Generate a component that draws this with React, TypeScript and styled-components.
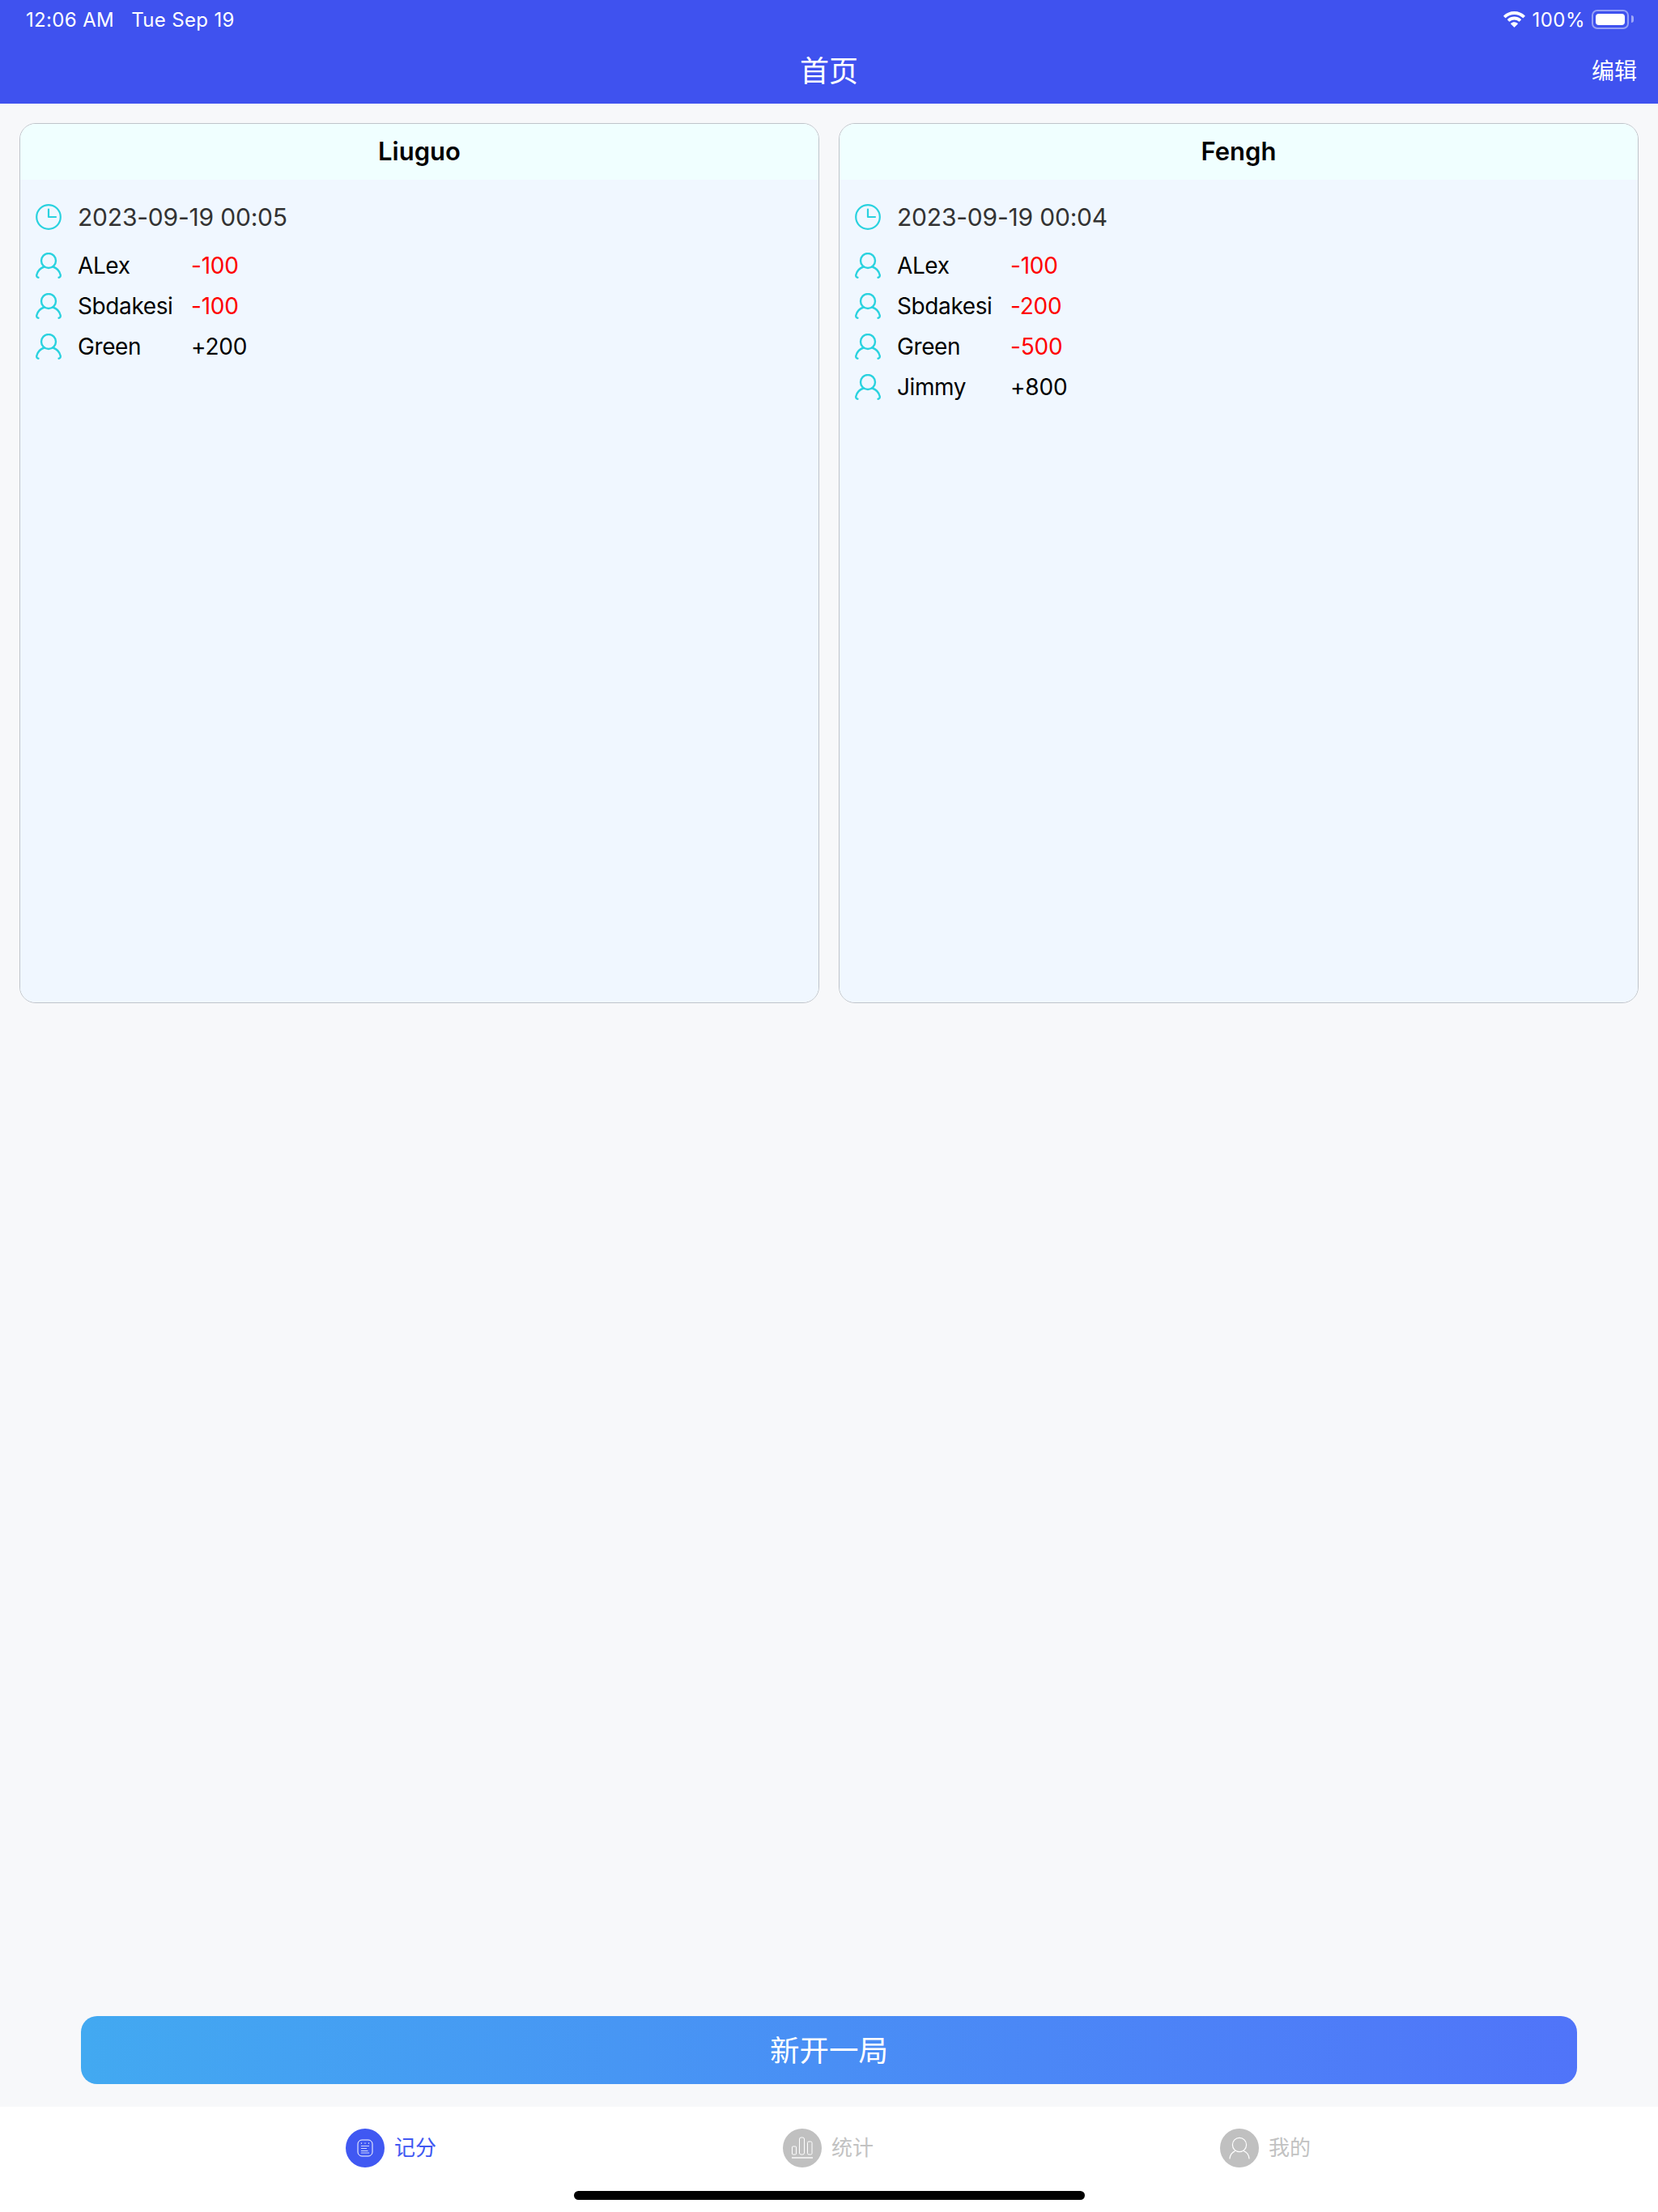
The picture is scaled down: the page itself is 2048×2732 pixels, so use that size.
import React from "react";
import styled, { createGlobalStyle } from "styled-components";

interface ScoreRow {
  name: string;
  score: string;
}

interface Game {
  host: string;
  time: string;
  rows: ScoreRow[];
}

const games: Game[] = [
  {
    host: "Liuguo",
    time: "2023-09-19 00:05",
    rows: [
      { name: "ALex", score: "-100" },
      { name: "Sbdakesi", score: "-100" },
      { name: "Green", score: "+200" },
    ],
  },
  {
    host: "Fengh",
    time: "2023-09-19 00:04",
    rows: [
      { name: "ALex", score: "-100" },
      { name: "Sbdakesi", score: "-200" },
      { name: "Green", score: "-500" },
      { name: "Jimmy", score: "+800" },
    ],
  },
];

const ClockIcon = () => (
  <svg width="32" height="32" viewBox="0 0 32 32" fill="none" stroke="#2ad2df" strokeWidth="2.2" strokeLinecap="round" strokeLinejoin="round">
    <circle cx="16" cy="16" r="14.8" />
    <path d="M16 6.5V16H25" />
  </svg>
);

const UserIcon = () => (
  <svg width="32" height="32" viewBox="0 0 32 32" fill="none" stroke="#2ad2df" strokeWidth="2.4" strokeLinecap="round" strokeLinejoin="round">
    <circle cx="16" cy="10" r="9" />
    <path d="M10.5 17.5C6 19 2.5 22.5 1.3 27.5C1 29.5 2 30.8 3.4 30.8" />
    <path d="M21.5 17.5C26 19 29.5 22.5 30.7 27.5C31 29.5 30 30.8 28.6 30.8" />
  </svg>
);

const WifiIcon = () => (
  <svg width="27" height="20" viewBox="0 0 27 20" fill="#fff">
    <path d="M13.5 0C8.4 0 3.8 2 .4 5.3c-.3.3-.3.6 0 .9l1.8 1.9c.3.3.6.3.9 0A15 15 0 0 1 13.5 4c4 0 7.7 1.6 10.4 4.1.3.3.6.3.9 0l1.8-1.9c.3-.3.3-.6 0-.9C23.2 2 18.6 0 13.5 0Z" />
    <path d="M13.5 6.6c-3.2 0-6.1 1.2-8.3 3.2-.3.3-.3.6 0 .9l1.8 1.9c.3.3.6.3.9 0a8.6 8.6 0 0 1 11.2 0c.3.3.6.3.9 0l1.8-1.9c.3-.3.3-.6 0-.9a12.2 12.2 0 0 0-8.3-3.2Z" />
    <path d="M13.5 13.2c-1.6 0-3.1.6-4.2 1.6-.3.3-.3.6 0 .9l3.8 3.9c.3.3.5.3.8 0l3.8-3.9c.3-.3.3-.6 0-.9a6.2 6.2 0 0 0-4.2-1.6Z" />
  </svg>
);

const NoteIcon = () => (
  <svg width="20" height="22" viewBox="0 0 20 22" fill="none" stroke="#fff">
    <rect x="1" y="1" width="18" height="20" rx="5" strokeWidth="1" />
    <path d="M5 8.5H15M5 11.5H12M5 14.5H13.5M5 17H15" strokeWidth="1.2" opacity=".75" />
    <path d="M5 5.2h1M9.5 5.2h1M14 5.2h1" strokeWidth="1.2" />
  </svg>
);

const ChartIcon = () => (
  <svg width="28" height="28" viewBox="0 0 28 28" fill="none" stroke="#fff" strokeWidth="1">
    <rect x="1.5" y="12" width="5" height="10" rx="1" />
    <rect x="10.5" y="1" width="6" height="21" rx="2" />
    <rect x="20.5" y="6" width="5.5" height="16" rx="1.5" />
    <path d="M1 26H27" strokeWidth="1.4" />
  </svg>
);

const ProfileIcon = () => (
  <svg width="26" height="28" viewBox="0 0 26 28" fill="none" stroke="#fff" strokeWidth="1.2" strokeLinecap="round">
    <circle cx="13" cy="10" r="8.6" />
    <path d="M8 17.5C4 19 1.5 22.5 1 27" />
    <path d="M18 17.5C22 19 24.5 22.5 25 27" />
  </svg>
);

const App = () => {
  return (
    <Page>
      <GlobalStyle />
      <Header>
        <StatusBar>
          <StatusGroup>
            <span>12:06 AM</span>
            <span>Tue Sep 19</span>
          </StatusGroup>
          <StatusRight>
            <WifiIcon />
            <BatteryText>100%</BatteryText>
            <Battery>
              <BatteryFill />
            </Battery>
          </StatusRight>
        </StatusBar>
        <NavBar>
          <NavTitle>首页</NavTitle>
          <NavAction>编辑</NavAction>
        </NavBar>
      </Header>

      <Main>
        <CardGrid>
          {games.map((game) => (
            <Card key={game.host}>
              <CardHead>{game.host}</CardHead>
              <CardBody>
                <TimeRow>
                  <ClockIcon />
                  <TimeText>{game.time}</TimeText>
                </TimeRow>
                {game.rows.map((row) => (
                  <PlayerRow key={row.name}>
                    <UserIcon />
                    <PlayerName>{row.name}</PlayerName>
                    <Score $negative={row.score.startsWith("-")}>{row.score}</Score>
                  </PlayerRow>
                ))}
              </CardBody>
            </Card>
          ))}
        </CardGrid>
      </Main>

      <ButtonWrap>
        <NewGameButton>新开一局</NewGameButton>
      </ButtonWrap>

      <TabBar>
        <TabItem $active>
          <TabCircle $active>
            <NoteIcon />
          </TabCircle>
          <TabLabel>记分</TabLabel>
        </TabItem>
        <TabItem>
          <TabCircle>
            <ChartIcon />
          </TabCircle>
          <TabLabel>统计</TabLabel>
        </TabItem>
        <TabItem>
          <TabCircle>
            <ProfileIcon />
          </TabCircle>
          <TabLabel>我的</TabLabel>
        </TabItem>
        <HomeIndicator />
      </TabBar>
    </Page>
  );
};

export default App;

const GlobalStyle = createGlobalStyle`
  html, body {
    margin: 0;
    padding: 0;
  }
  * {
    box-sizing: border-box;
  }
`;

const Page = styled.div`
  width: 2048px;
  height: 2732px;
  display: flex;
  flex-direction: column;
  overflow: hidden;
  background-color: #f7f8fa;
  font-family: Inter, "Noto Sans CJK SC", sans-serif;
`;

const Header = styled.div`
  height: 128px;
  background-color: #3f52ef;
  color: #fff;
`;

const StatusBar = styled.div`
  height: 48px;
  padding: 0 36px 0 32px;
  display: flex;
  justify-content: space-between;
  align-items: center;
  font-size: 24px;
`;

const StatusGroup = styled.div`
  display: flex;
  gap: 21px;
  letter-spacing: 0.35px;
`;

const StatusRight = styled.div`
  display: flex;
  align-items: center;
  gap: 8px;
`;

const BatteryText = styled.span`
  letter-spacing: 0.5px;
`;

const Battery = styled.div`
  position: relative;
  width: 46px;
  height: 24px;
  padding: 3px;
  border: 2px solid rgba(255, 255, 255, 0.45);
  border-radius: 7px;

  &::after {
    content: "";
    position: absolute;
    right: -8px;
    top: 5px;
    width: 3px;
    height: 9px;
    background-color: rgba(255, 255, 255, 0.5);
    border-radius: 0 3px 3px 0;
  }
`;

const BatteryFill = styled.div`
  height: 100%;
  background-color: #fff;
  border-radius: 4px;
`;

const NavBar = styled.div`
  position: relative;
  height: 80px;
  display: flex;
  justify-content: center;
  align-items: center;
`;

const NavTitle = styled.div`
  font-size: 36px;
  line-height: 80px;
`;

const NavAction = styled.div`
  position: absolute;
  right: 26px;
  top: 0;
  font-size: 28px;
  line-height: 80px;
`;

const Main = styled.div`
  flex: 1;
  padding: 24px 24px 0;
`;

const CardGrid = styled.div`
  display: grid;
  grid-template-columns: 988px 988px;
  gap: 24px;
`;

const Card = styled.div`
  height: 1087px;
  display: flex;
  flex-direction: column;
  overflow: hidden;
  border: 1.5px solid #bfc4ca;
  border-radius: 20px;
`;

const CardHead = styled.div`
  height: 69px;
  padding-bottom: 2px;
  display: flex;
  justify-content: center;
  align-items: center;
  background-color: #f0ffff;
  color: #000;
  font-size: 31px;
  font-weight: 600;
`;

const CardBody = styled.div`
  flex: 1;
  padding: 30px 19px 0;
  background-color: #f0f7ff;
`;

const TimeRow = styled.div`
  height: 32px;
  margin-bottom: 19px;
  display: flex;
  align-items: center;
  gap: 20px;
`;

const TimeText = styled.span`
  color: #333;
  font-size: 30px;
  letter-spacing: -0.2px;
`;

const PlayerRow = styled.div`
  height: 50px;
  display: flex;
  align-items: center;
  gap: 20px;
  font-size: 28px;
`;

const PlayerName = styled.span`
  width: 120px;
  color: #000;
  letter-spacing: -0.4px;
  white-space: nowrap;
`;

const Score = styled.span<{ $negative?: boolean }>`
  color: ${(p) => (p.$negative ? "#ff0000" : "#000")};
  letter-spacing: -0.2px;
`;

const ButtonWrap = styled.div`
  padding: 0 100px 28px;
`;

const NewGameButton = styled.div`
  height: 84px;
  padding-bottom: 3px;
  display: flex;
  justify-content: center;
  align-items: center;
  border-radius: 20px;
  background: linear-gradient(90deg, #42a9f1, #5074f9);
  color: #fff;
  font-size: 36.5px;
`;

const TabBar = styled.div`
  position: relative;
  height: 130px;
  padding: 27px 213px 0;
  display: grid;
  grid-template-columns: repeat(3, 540px);
  align-items: start;
  background-color: #fff;
`;

const TabItem = styled.div<{ $active?: boolean }>`
  height: 48px;
  display: flex;
  justify-content: center;
  align-items: center;
  gap: 12px;
  color: ${(p) => (p.$active ? "#4058f2" : "#c2c2c2")};
  font-size: 26px;
`;

const TabLabel = styled.span`
  margin-bottom: 6px;
`;

const TabCircle = styled.div<{ $active?: boolean }>`
  width: 48px;
  height: 48px;
  display: flex;
  justify-content: center;
  align-items: center;
  border-radius: 50%;
  background-color: ${(p) => (p.$active ? "#4058f2" : "#c0c0c0")};
`;

const HomeIndicator = styled.div`
  position: absolute;
  left: 709px;
  bottom: 15px;
  width: 631px;
  height: 11px;
  border-radius: 6px;
  background-color: #000;
`;
